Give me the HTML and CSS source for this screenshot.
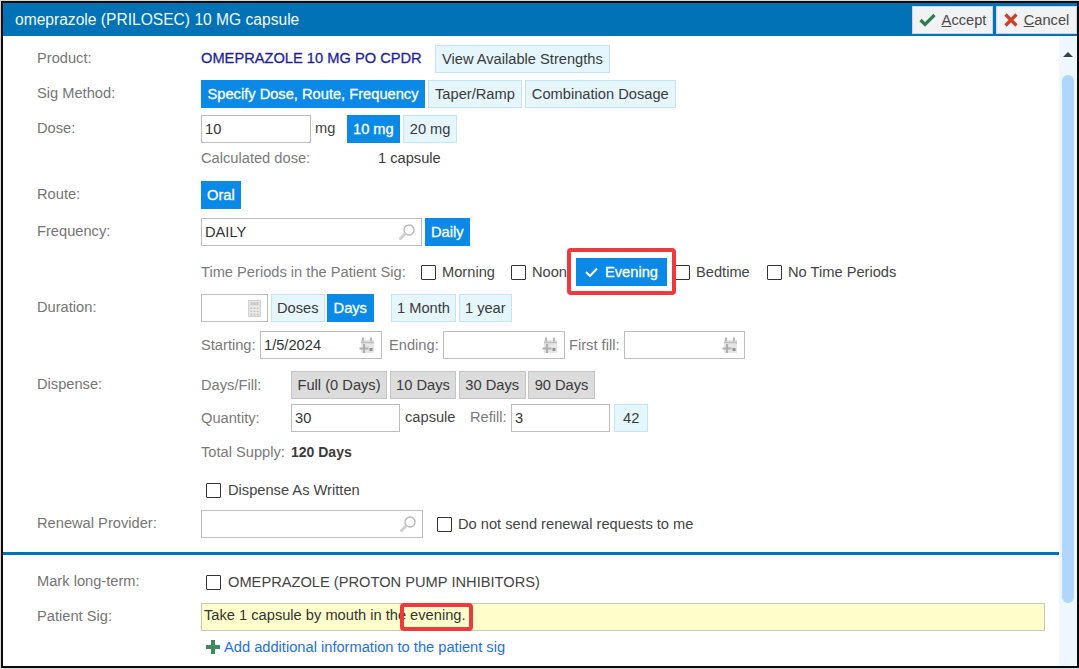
FILE: index.html
```html
<!DOCTYPE html>
<html lang="en">
<head>
  <meta charset="UTF-8" />
  <title>omeprazole (PRILOSEC) 10 MG capsule</title>
  <link rel="stylesheet" href="styles.css">
</head>
<body>
  <svg class="icon-defs" width="0" height="0">
    <symbol id="i-search" viewBox="0 0 18 18">
      <circle cx="11" cy="7" r="5" fill="none" stroke="#b8b8b8" stroke-width="1.4" />
      <path d="M7 11 L2.500 15.500" stroke="#cfcfcf" stroke-width="3" stroke-linecap="round" />
    </symbol>
    <symbol id="i-calendar" viewBox="0 0 18 18">
      <path d="M3 4h13v13H3z" fill="#e6e6e6" />
      <path d="M5 1.500v4M13 1.500v4" stroke="#b8b8b8" stroke-width="2" />
      <path d="M3 6.500h13" stroke="#bdbdbd" stroke-width="1.500" />
      <path d="M6 8v9M1.500 12.500h9" stroke="#b0b0b0" stroke-width="2.200" />
      <path d="M11.500 12h3v3h-3z" fill="#8f8f8f" />
    </symbol>
    <symbol id="i-calc" viewBox="0 0 12 16">
      <rect x="0.500" y="0.500" width="11" height="15" fill="#ececec" stroke="#cfcfcf" />
      <path d="M2 2h8v3H2z" fill="#cbcbcb" />
      <path d="M2 7h2v1.500H2zM5 7h2v1.500H5zM8 7h2v1.500H8zM2 10h2v1.500H2zM5 10h2v1.500H5zM8 10h2v1.500H8zM2 13h2v1.500H2zM5 13h2v1.500H5zM8 13h2v1.500H8z" fill="#c4c4c4" />
    </symbol>
  </svg>

  <div class="window">
    <header class="titlebar">
      <h1>omeprazole (PRILOSEC) 10 MG capsule</h1>
      <div class="titlebar-actions">
        <button class="action-btn accept-btn">
          <svg width="17" height="14" viewBox="0 0 17 14"><path d="M1.500 7 L6 11.500 L15.500 2" fill="none" stroke="#2f7d4f" stroke-width="3.200" /></svg>
          <span><u>A</u>ccept</span>
        </button>
        <button class="action-btn cancel-btn">
          <svg width="14" height="14" viewBox="0 0 14 14"><path d="M1.500 1.500 L12.500 12.500 M12.500 1.500 L1.500 12.500" fill="none" stroke="#c9412b" stroke-width="3.200" /></svg>
          <span><u>C</u>ancel</span>
        </button>
      </div>
    </header>

    <div class="content">
      <main class="form">
        <div class="row">
          <label class="row-label">Product:</label>
          <span class="product-name">OMEPRAZOLE 10 MG PO CPDR</span>
          <button class="btn btn-wide">View Available Strengths</button>
        </div>

        <div class="row mt7">
          <label class="row-label">Sig Method:</label>
          <button class="btn btn-on btn-specify">Specify Dose, Route, Frequency</button>
          <button class="btn btn-wide">Taper/Ramp</button>
          <button class="btn btn-wide">Combination Dosage</button>
        </div>

        <div class="row mt7">
          <label class="row-label">Dose:</label>
          <div class="field w110"><span>10</span></div>
          <span class="unit unit-mg">mg</span>
          <button class="btn btn-on">10 mg</button>
          <button class="btn btn-wide">20 mg</button>
        </div>

        <div class="row mt1">
          <label class="row-label"></label>
          <span class="muted calc-label">Calculated dose:</span>
          <span class="value">1 capsule</span>
        </div>

        <div class="row mt9">
          <label class="row-label">Route:</label>
          <button class="btn btn-on">Oral</button>
        </div>

        <div class="row mt9">
          <label class="row-label">Frequency:</label>
          <div class="field w221"><span>DAILY</span><svg class="field-icon"><use href="#i-search" /></svg></div>
          <button class="btn btn-on">Daily</button>
        </div>

        <div class="row mt12">
          <label class="row-label"></label>
          <span class="muted time-label">Time Periods in the Patient Sig:</span>
          <label class="check check-morning"><i class="box"></i>Morning</label>
          <label class="check check-noon"><i class="box"></i>Noon</label>
          <button class="btn btn-on btn-evening">
            <svg width="13" height="10" viewBox="0 0 13 10"><path d="M1 5 L5 9 L12 1.500" fill="none" stroke="#fff" stroke-width="2" /></svg>
            Evening
          </button>
          <label class="check check-bedtime"><i class="box"></i>Bedtime</label>
          <label class="check"><i class="box"></i>No Time Periods</label>
        </div>

        <div class="row mt8">
          <label class="row-label">Duration:</label>
          <div class="field w67"><svg class="field-icon calc-icon"><use href="#i-calc" /></svg></div>
          <button class="btn btn-doses">Doses</button>
          <button class="btn btn-on btn-wide">Days</button>
          <button class="btn btn-month">1 Month</button>
          <button class="btn">1 year</button>
        </div>

        <div class="row mt9">
          <label class="row-label"></label>
          <span class="muted starting-label">Starting:</span>
          <div class="field w122"><span>1/5/2024</span><svg class="field-icon"><use href="#i-calendar" /></svg></div>
          <span class="muted ending-label">Ending:</span>
          <div class="field w122"><svg class="field-icon"><use href="#i-calendar" /></svg></div>
          <span class="muted fill-label">First fill:</span>
          <div class="field w121"><svg class="field-icon"><use href="#i-calendar" /></svg></div>
        </div>

        <div class="row mt12">
          <label class="row-label">Dispense:</label>
          <span class="muted sub-label">Days/Fill:</span>
          <button class="btn btn-grey">Full (0 Days)</button>
          <button class="btn btn-grey">10 Days</button>
          <button class="btn btn-grey">30 Days</button>
          <button class="btn btn-grey">90 Days</button>
        </div>

        <div class="row mt5">
          <label class="row-label"></label>
          <span class="muted sub-label">Quantity:</span>
          <div class="field w109"><span>30</span></div>
          <span class="unit unit-capsule">capsule</span>
          <span class="muted refill-label">Refill:</span>
          <div class="field w99"><span>3</span></div>
          <button class="btn btn-refill">42</button>
        </div>

        <div class="row mt6">
          <label class="row-label"></label>
          <span class="muted supply-label">Total Supply:</span>
          <strong class="value-bold">120 Days</strong>
        </div>

        <div class="row mt10">
          <label class="row-label"></label>
          <label class="check check-first"><i class="box"></i>Dispense As Written</label>
        </div>

        <div class="row mt6">
          <label class="row-label">Renewal Provider:</label>
          <div class="field w222"><svg class="field-icon"><use href="#i-search" /></svg></div>
          <label class="check check-renew"><i class="box"></i>Do not send renewal requests to me</label>
        </div>

        <hr class="divider">

        <div class="row">
          <label class="row-label">Mark long-term:</label>
          <label class="check check-first"><i class="box"></i>OMEPRAZOLE (PROTON PUMP INHIBITORS)</label>
        </div>

        <div class="row mt7">
          <label class="row-label">Patient Sig:</label>
          <div class="field sig-field">Take 1 capsule by mouth in the evening.</div>
        </div>

        <div class="row mt2">
          <label class="row-label"></label>
          <a class="add-link" href="#">
            <svg width="14" height="14" viewBox="0 0 14 14"><path d="M5 0h4v5h5v4H9v5H5V9H0V5h5z" fill="#3d8a5f" /></svg>
            Add additional information to the patient sig
          </a>
        </div>
      </main>

      <aside class="scrollbar">
        <div class="scroll-up"><i class="arrow-up"></i></div>
        <div class="scroll-thumb"></div>
      </aside>
    </div>

    <div class="callout callout-evening"></div>
    <div class="callout callout-sig"></div>
  </div>
</body>
</html>
```

FILE: styles.css
```css
/* Base */
html, body {
  margin: 0;
  height: 669px;
  overflow: hidden;
  background-color: #d9d9d9;
}
body {
  font-family: "Liberation Sans", Arial, sans-serif;
  font-size: 14.67px;
  color: #3a3a3a;
}
.icon-defs {
  position: absolute;
}

/* Window */
.window {
  position: relative;
  box-sizing: border-box;
  width: 1078px;
  height: 667px;
  margin: 1px 0 0 1px;
  border: 2px solid #0a0a0a;
  background-color: #fff;
  display: flex;
  flex-direction: column;
}

/* Title bar */
.titlebar {
  height: 33px;
  flex: none;
  background-color: #0072b5;
  display: flex;
  align-items: center;
  justify-content: space-between;
}
.titlebar h1 {
  margin: 0 0 0 12px;
  font-size: 15.6px;
  font-weight: 400;
  color: #f4f9fc;
}
.titlebar-actions {
  display: flex;
  gap: 3px;
}
.action-btn {
  height: 28px;
  padding: 0;
  display: flex;
  align-items: center;
  justify-content: center;
  gap: 6px;
  border: 1px solid #c8d6df;
  background-color: #f0f2f4;
  font: inherit;
  color: #4a4a4a;
}
.accept-btn {
  width: 81px;
}
.cancel-btn {
  width: 81px;
}

/* Form */
.content {
  flex: 1;
  display: flex;
  min-height: 0;
}
.form {
  flex: 1;
  padding-top: 9px;
  min-width: 0;
}
.row {
  height: 28px;
  display: flex;
  align-items: center;
  padding-left: 34px;
}
.mt1 { margin-top: 1px; }
.mt2 { margin-top: 2px; }
.mt5 { margin-top: 5px; }
.mt6 { margin-top: 6px; }
.mt7 { margin-top: 7px; }
.mt8 { margin-top: 8px; }
.mt9 { margin-top: 9px; }
.mt10 { margin-top: 10px; }
.mt12 { margin-top: 12px; }

.row-label {
  flex: none;
  width: 164px;
  color: #757575;
  position: relative;
  top: -1px;
}
.muted {
  color: #7a7a7a;
  flex: none;
}
.product-name {
  width: 234px;
  color: #1f1f9e;
  -webkit-text-stroke: 0.3px #1f1f9e;
  position: relative;
  top: -1px;
}

/* Buttons */
.btn {
  flex: none;
  box-sizing: border-box;
  height: 28px;
  padding: 0 5px;
  margin-right: 3px;
  border: 1px solid #c2e4f4;
  background-color: #e5f6fd;
  font: inherit;
  color: #3a3a3a;
}
.btn-wide {
  padding: 0 6px;
}
.btn-on {
  background-color: #0a8ae6;
  border-color: #0a8ae6;
  color: #fff;
  -webkit-text-stroke: 0.3px #fff;
}
.btn-specify {
  width: 224px;
  padding: 0;
}
.btn-grey {
  padding: 0 5.5px;
  margin-right: 2.5px;
  background-color: #dcdcdc;
  border-color: #c4c4c4;
}
.btn-doses {
  margin-right: 2px;
}
.btn-month {
  margin-left: 14px;
}
.btn-evening {
  width: 91px;
  margin: 0 8px 0 9px;
  padding: 0;
  display: flex;
  align-items: center;
  justify-content: center;
  gap: 7px;
}
.btn-refill {
  margin-left: 1px;
  padding: 0 8px;
}

/* Inputs */
.field {
  flex: none;
  box-sizing: border-box;
  position: relative;
  height: 28px;
  padding: 0 3px;
  display: flex;
  align-items: center;
  border: 1px solid #bdbdbd;
  background-color: #fff;
  margin-right: 3px;
  color: #333;
}
.field-icon {
  position: absolute;
  right: 5px;
  top: 4px;
  width: 18px;
  height: 18px;
}
.calc-icon {
  right: 6px;
  top: 5px;
  width: 13px;
  height: 17px;
}
.w67 { width: 67px; }
.w99 { width: 99px; }
.w109 { width: 109px; }
.w110 { width: 110px; }
.w121 { width: 121px; }
.w122 { width: 122px; }
.w221 { width: 221px; }
.w222 { width: 222px; }
.sig-field {
  width: 844px;
  background-color: #ffffcc;
  color: #333;
  padding: 0 2px 4px;
  border-color: #c8c8b8;
}

/* Inline text */
.unit {
  flex: none;
  color: #444;
}
.unit-mg {
  width: 32px;
  margin-left: 1px;
  position: relative;
  top: -1px;
}
.unit-capsule {
  width: 65px;
  margin-left: 2px;
  position: relative;
  top: -1px;
}
.calc-label {
  width: 177px;
}
.value {
  color: #3a3a3a;
}
.value-bold {
  font-size: 14px;
  font-weight: 700;
  color: #3a3a3a;
}
.time-label {
  width: 220px;
}
.starting-label {
  width: 59px;
}
.ending-label {
  width: 54px;
  margin-left: 4px;
}
.fill-label {
  width: 55px;
  margin-left: 1px;
}
.sub-label {
  width: 90px;
}
.refill-label {
  width: 41px;
  position: relative;
  top: -1px;
}
.supply-label {
  width: 90px;
}

/* Checkboxes */
.check {
  flex: none;
  display: flex;
  align-items: center;
  gap: 6px;
  color: #444;
  margin-right: 17px;
}
.box {
  display: block;
  box-sizing: border-box;
  width: 15px;
  height: 15px;
  border: 1.500px solid #333;
  border-radius: 1px;
  background-color: #fff;
}
.check-first {
  margin-left: 5px;
  gap: 7px;
}
.check-morning {
  margin-right: 0;
  width: 90px;
}
.check-noon {
  margin-right: 0;
  width: 56px;
}
.check-bedtime {
  margin-right: 0;
  width: 92px;
}
.check-renew {
  margin-left: 11px;
}

/* Lower section */
.divider {
  height: 3px;
  margin: 14px 0 13px;
  border: none;
  background-color: #0072b5;
}
.add-link {
  display: flex;
  align-items: center;
  gap: 4px;
  margin-left: 5px;
  color: #1f6fe5;
  text-decoration: none;
}

/* Scrollbar */
.scrollbar {
  flex: none;
  width: 18px;
  background-color: #eef6fe;
  position: relative;
}
.scroll-up {
  height: 35px;
  display: flex;
  justify-content: center;
  padding-top: 16px;
  box-sizing: border-box;
}
.arrow-up {
  display: block;
  width: 0;
  height: 0;
  border-left: 5px solid transparent;
  border-right: 5px solid transparent;
  border-bottom: 5px solid #3a3f45;
}
.scroll-thumb {
  width: 12px;
  height: 528px;
  margin: 4px auto 0;
  border-radius: 6px;
  background-color: #aed6ff;
}

/* Red annotation boxes drawn over the form */
.callout {
  position: absolute;
  box-sizing: border-box;
  border: 4px solid #ee3a3f;
  border-radius: 4px;
}
.callout-evening {
  left: 564px;
  top: 245px;
  width: 109px;
  height: 47px;
}
.callout-sig {
  left: 397px;
  top: 600px;
  width: 73px;
  height: 28px;
}
```
